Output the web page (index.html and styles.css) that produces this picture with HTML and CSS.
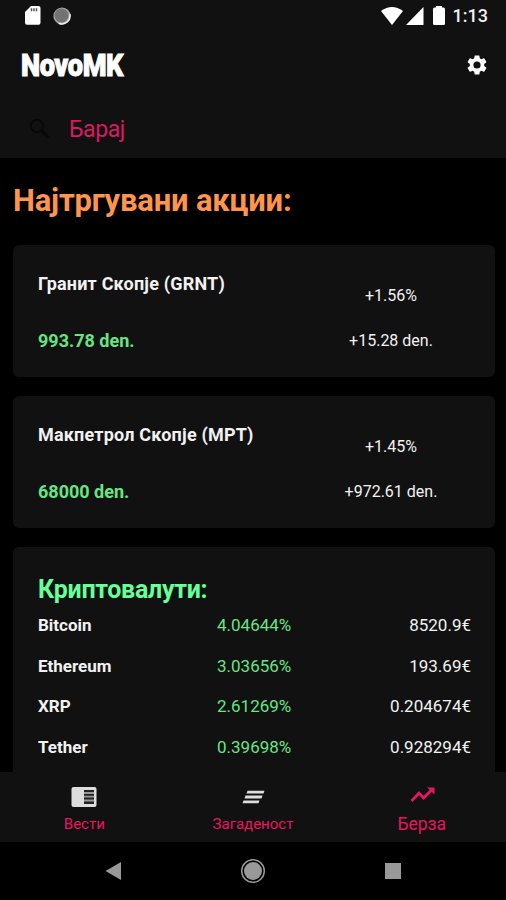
FILE: index.html
```
<!DOCTYPE html>
<html lang="mk">
<head>
  <meta charset="utf-8">
  <title>NovoMK</title>
  <link rel="stylesheet" href="styles.css">
</head>
<body>
  <header class="header">
    <div class="status-bar">
      <svg class="sd-icon" width="16" height="19" viewBox="0 0 16 19">
        <path fill="#fff" d="M6 0h7.500a2 2 0 0 1 2 2v14.800a2 2 0 0 1-2 2h-11.500a2 2 0 0 1-2-2V6z"/>
        <path stroke="#555" stroke-width="1.500" d="M6.500 2.200v3M9 2.200v3M11.500 2.200v3"/>
      </svg>
      <svg class="sync-icon" width="18" height="18" viewBox="0 0 18 18">
        <circle cx="9" cy="9" r="8.600" fill="#aaa"/>
        <path d="M16.800 7a8 8 0 0 1-11 9.200" fill="none" stroke="#eee" stroke-width="1.500"/>
        <circle cx="8.500" cy="8.500" r="7" fill="#737373"/>
      </svg>
      <div class="status-right">
        <svg width="22" height="18" viewBox="0 0 22 18"><path fill="#fff" d="M0 4Q11-4 22 4L11 18z"/></svg>
        <svg class="signal-icon" width="18" height="18" viewBox="0 0 18 18"><path fill="#fff" d="M17.500 0v18H0z"/></svg>
        <svg class="battery-icon" width="12" height="19" viewBox="0 0 12 19"><path fill="#fff" d="M3 0h6v1.500h1.500A1.500 1.500 0 0 1 12 3v14.500a1.500 1.500 0 0 1-1.500 1.500h-9A1.500 1.500 0 0 1 0 17.500v-14.500A1.500 1.500 0 0 1 1.500 1.500H3z"/></svg>
        <span class="clock">1:13</span>
      </div>
    </div>
    <div class="title-bar">
      <span class="logo">NovoMK</span>
      <svg class="settings" width="24" height="24" viewBox="0 0 24 24">
        <path fill="#fff" d="M19.140 12.940c.040-.300.060-.610.060-.940s-.020-.640-.070-.940l2.030-1.580a.49.49 0 0 0 .120-.610l-1.920-3.320a.49.49 0 0 0-.590-.220l-2.390.960c-.500-.380-1.030-.700-1.620-.940l-.360-2.540a.48.48 0 0 0-.480-.410h-3.840c-.240 0-.430.170-.470.410l-.360 2.540c-.590.240-1.130.570-1.620.940l-2.390-.960a.48.48 0 0 0-.590.220L2.740 8.870a.48.48 0 0 0 .120.610l2.030 1.580c-.050.300-.090.630-.090.940s.020.640.070.940l-2.030 1.580a.49.49 0 0 0-.120.610l1.920 3.320c.120.220.370.290.590.220l2.390-.960c.500.380 1.030.700 1.620.940l.360 2.540c.050.240.240.410.480.410h3.840c.240 0 .440-.170.470-.410l.360-2.540c.590-.240 1.130-.560 1.620-.940l2.390.960c.220.080.470 0 .590-.220l1.920-3.320a.48.48 0 0 0-.120-.610zM12 15.600a3.600 3.600 0 1 1 0-7.200 3.600 3.600 0 0 1 0 7.200z"/>
      </svg>
    </div>
    <div class="search">
      <svg width="22" height="22" viewBox="0 0 22 22"><circle cx="8" cy="8" r="6.200" fill="none" stroke="#080808" stroke-width="2"/><path d="M12.500 12.500l7 7" stroke="#080808" stroke-width="2.500"/></svg>
      <span class="search-text">Барај</span>
    </div>
  </header>

  <main class="content">
    <h1>Најтргувани акции:</h1>
    <div class="card stock">
      <div class="stock-left">
        <div class="stock-name">Гранит Скопје (GRNT)</div>
        <div class="stock-price">993.78 den.</div>
      </div>
      <div class="stock-right">
        <div>+1.56%</div>
        <div>+15.28 den.</div>
      </div>
    </div>
    <div class="card stock">
      <div class="stock-left">
        <div class="stock-name">Макпетрол Скопје (МРТ)</div>
        <div class="stock-price">68000 den.</div>
      </div>
      <div class="stock-right">
        <div>+1.45%</div>
        <div>+972.61 den.</div>
      </div>
    </div>
    <div class="card crypto">
      <h2>Криптовалути:</h2>
      <div class="row"><b>Bitcoin</b><span class="change">4.04644%</span><span class="value">8520.9€</span></div>
      <div class="row"><b>Ethereum</b><span class="change">3.03656%</span><span class="value">193.69€</span></div>
      <div class="row"><b>XRP</b><span class="change">2.61269%</span><span class="value">0.204674€</span></div>
      <div class="row"><b>Tether</b><span class="change">0.39698%</span><span class="value">0.928294€</span></div>
    </div>
  </main>

  <nav class="tabs">
    <div class="tab">
      <svg width="26" height="26" viewBox="0 0 26 26">
        <rect x="0.500" y="3" width="25" height="20" rx="2" fill="#ddd"/>
        <rect x="13" y="6" width="10" height="14" fill="#222"/>
        <path d="M13 9h10M13 12.700h10M13 16.500h10" stroke="#999" stroke-width="1.800"/>
      </svg>
      <span>Вести</span>
    </div>
    <div class="tab">
      <svg width="26" height="26" viewBox="0 0 26 26"><path d="M7.500 6.800H24.500L23.500 9.600H6.500zM5.500 11.600H22.500L21.500 14.400H4.500zM3.500 16.400H19.500L18.500 19.200H2.500z" fill="#ddd"/></svg>
      <span>Загаденост</span>
    </div>
    <div class="tab active">
      <svg width="26" height="26" viewBox="0 0 26 26"><path d="M2.500 17l7.500-8 4.500 5 8-8" fill="none" stroke="#e91560" stroke-width="2.800"/><path d="M18 3.500H25.500v7z" fill="#e91560"/></svg>
      <span>Берза</span>
    </div>
  </nav>

  <footer class="system-nav">
    <svg width="18" height="20" viewBox="0 0 18 20"><path fill="#999" d="M17 1v18L1.500 10z"/></svg>
    <svg width="26" height="26" viewBox="0 0 26 26"><circle cx="13" cy="13" r="11.300" fill="none" stroke="#999" stroke-width="1.500"/><circle cx="13" cy="13" r="9" fill="#999"/></svg>
    <svg width="18" height="18" viewBox="0 0 18 18"><rect x="1" y="1" width="16" height="16" fill="#999"/></svg>
  </footer>
</body>
</html>
```
FILE: styles.css
```
* {
  box-sizing: border-box;
}

body {
  margin: 0;
  height: 900px;
  display: flex;
  flex-direction: column;
  overflow: hidden;
  background: #000;
  color: #f2f2f2;
  font-family: Roboto, sans-serif;
}

svg {
  display: block;
  flex: none;
}

.header {
  height: 158px;
  flex: none;
  background: #111;
}

.status-bar {
  height: 31px;
  padding: 0 18px 0 25px;
  display: flex;
  align-items: center;
}

.sync-icon {
  margin-left: 12px;
}

.status-right {
  margin-left: auto;
  display: flex;
  align-items: center;
}

.signal-icon {
  margin-left: 3px;
}

.battery-icon {
  margin-left: 9px;
}

.clock {
  margin-left: 8px;
  font-size: 18px;
  font-weight: 500;
  line-height: 31px;
}

.title-bar {
  height: 68px;
  padding: 0 17px 0 21px;
  display: flex;
  justify-content: space-between;
  align-items: center;
}

.logo {
  font-size: 32px;
  font-weight: 900;
  letter-spacing: -0.5px;
  color: #fff;
  -webkit-text-stroke: 1px #fff;
  transform: scaleX(0.85);
  transform-origin: left;
}

.search {
  height: 59px;
  padding-left: 29px;
  display: flex;
  align-items: center;
}

.search-text {
  margin-left: 18px;
  padding-top: 2px;
  font-size: 23px;
  letter-spacing: -0.4px;
  color: #d81b60;
}

.content {
  flex: 1;
  overflow: hidden;
  padding: 0 11px 0 13px;
}

h1 {
  margin: 0;
  height: 87px;
  line-height: 85px;
  font-size: 31px;
  letter-spacing: -0.2px;
  color: #ff944d;
}

.card {
  background: #111;
  border-radius: 6px;
  margin-bottom: 19px;
  padding: 0 25px;
}

.stock {
  height: 132px;
  display: flex;
  justify-content: space-between;
}

.stock-left {
  padding-top: 25px;
  font-size: 18px;
  font-weight: bold;
  line-height: 28px;
}

.stock-name {
  letter-spacing: 0.2px;
}

.stock-price {
  margin-top: 29px;
  color: #66e585;
}

.stock-right {
  width: 158px;
  padding-top: 37px;
  font-size: 16px;
  line-height: 28px;
  text-align: center;
}

.stock-right div + div {
  margin-top: 17px;
}

.crypto {
  height: 300px;
  padding: 27px 24px 0 25px;
}

h2 {
  margin: 0;
  font-size: 25px;
  line-height: 31px;
  letter-spacing: -0.3px;
  color: #6f9;
}

.row {
  display: grid;
  grid-template-columns: 179px 1fr auto;
  height: 40.7px;
  line-height: 40px;
  font-size: 17px;
}

.change {
  color: #66e585;
}

.tabs {
  height: 70px;
  flex: none;
  display: flex;
  background: #111;
}

.tab {
  flex: 1;
  display: flex;
  flex-direction: column;
  align-items: center;
  padding-top: 12px;
  font-size: 15px;
  line-height: 28px;
  color: #e91560;
}

.active {
  font-size: 17.5px;
}

.system-nav {
  height: 58px;
  flex: none;
  padding: 0 104px;
  display: flex;
  justify-content: space-between;
  align-items: center;
}
```
